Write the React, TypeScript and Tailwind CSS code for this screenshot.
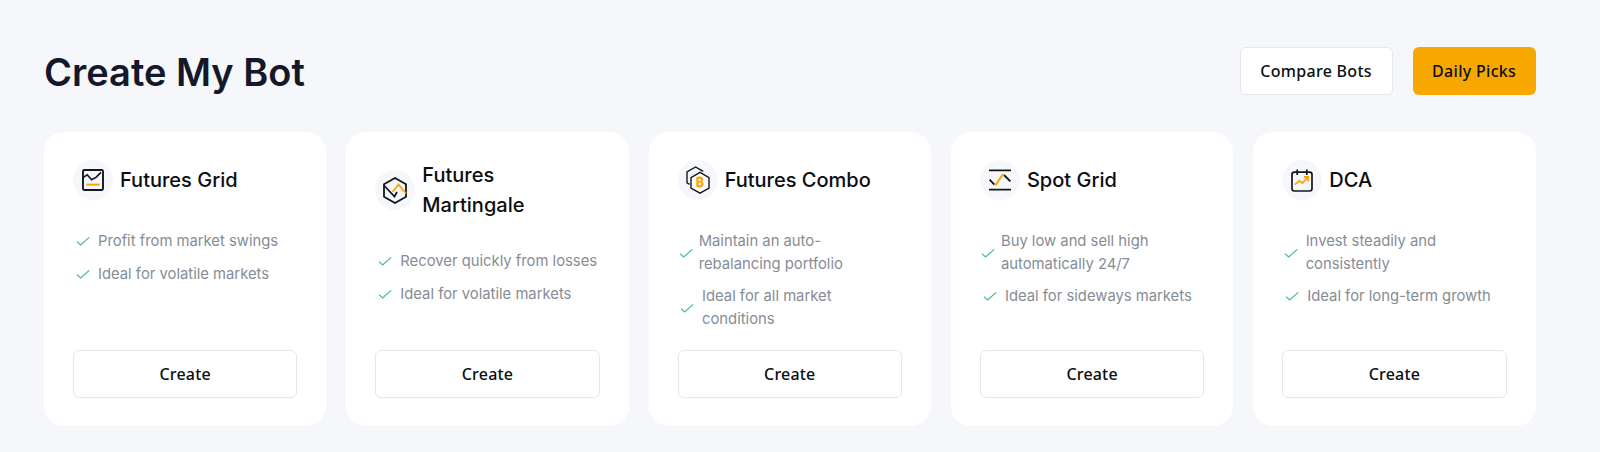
const inter = { fontFamily: "Inter, sans-serif" };
const noto = { fontFamily: "'Noto Sans', sans-serif" };

const BLACK = "#14161f";
const ORANGE = "#f8a700";

const CheckIcon = () => (
  <svg className="h-4 w-4" viewBox="0 0 16 16" fill="none" stroke="#3fbf86" strokeWidth={1.2} aria-hidden="true">
    <path d="M2 8.6l3.6 3.4L14.2 4.4" />
  </svg>
);

const GridIcon = () => (
  <svg className="h-[22px] w-[22px]" viewBox="0 0 22 22" fill="none" strokeWidth={1.9}>
    <rect x="1" y="1" width="20" height="20" rx="1.2" stroke={BLACK} />
    <path d="M1 8.6l4.2-2.8 4.4 5 4.4-2.4 5-5" stroke={BLACK} strokeWidth={1.7} />
    <path d="M4.4 15.6h13.2" stroke={ORANGE} strokeWidth={2} />
  </svg>
);

const MartingaleIcon = () => (
  <svg className="h-[27px] w-[24px]" viewBox="0 0 24 27" fill="none" strokeWidth={1.8}>
    <path d="M12 1l11 6.2v12.6L12 26 1 19.8V7.2z" stroke={BLACK} />
    <path d="M1 8.5l10.5 11 2.5-4.5" stroke={BLACK} />
    <path d="M9.5 15l6-7.5 7.5 9" stroke={ORANGE} />
  </svg>
);

const ComboIcon = () => (
  <svg className="h-[28px] w-[24px]" viewBox="0 0 24 28" fill="none" strokeWidth={1.4}>
    <path d="M3.6 18.4L1 16.8V6L9.6 1l7.6 4.4" stroke={BLACK} />
    <path d="M14 6.4l9 5.2v10.4l-9 5.2-9-5.2V11.6z" stroke={BLACK} fill="white" />
    <text x="14" y="21.4" textAnchor="middle" fontSize="12.5" fontWeight="800" fill={ORANGE} style={inter}>₿</text>
  </svg>
);

const SpotIcon = () => (
  <svg className="h-[22px] w-[24px]" viewBox="0 0 24 22" fill="none" strokeWidth={1.9}>
    <path d="M1 1.4h22M1 20.6h22" stroke={BLACK} />
    <path d="M1.6 10.6l4.8 5M16 6l6.4 6.4" stroke={BLACK} />
    <path d="M7.4 16.4L15 5" stroke={ORANGE} />
  </svg>
);

const DcaIcon = () => (
  <svg className="h-[23px] w-[22px]" viewBox="0 0 22 23" fill="none" strokeWidth={1.7}>
    <rect x="1" y="3.2" width="20" height="18.8" rx="2.4" stroke={BLACK} />
    <path d="M6.2 .4v5.6M15.8 .4v5.6" stroke={BLACK} />
    <path d="M3.8 15.6l4.4-3.8 3.2 2.2 5.4-5.8M13 8h4.2v4.2" stroke={ORANGE} strokeWidth={1.8} />
  </svg>
);

const BOTS = [
  {
    title: "Futures Grid",
    icon: <GridIcon />,
    features: ["Profit from market swings", "Ideal for volatile markets"],
  },
  {
    title: "Futures Martingale",
    icon: <MartingaleIcon />,
    features: ["Recover quickly from losses", "Ideal for volatile markets"],
  },
  {
    title: "Futures Combo",
    icon: <ComboIcon />,
    features: ["Maintain an auto-rebalancing portfolio", "Ideal for all market conditions"],
  },
  {
    title: "Spot Grid",
    icon: <SpotIcon />,
    features: ["Buy low and sell high automatically 24/7", "Ideal for sideways markets"],
  },
  {
    title: "DCA",
    icon: <DcaIcon />,
    features: ["Invest steadily and consistently", "Ideal for long-term growth"],
  },
];

const BotCard = ({ bot }: { bot: (typeof BOTS)[number] }) => (
  <div className="flex h-[294px] min-w-0 flex-col rounded-[20px] bg-white px-[29px] pt-[28px] pb-[28px]">
    <div className="flex items-center gap-[7px]">
      <div className="flex h-10 w-10 shrink-0 items-center justify-center rounded-full bg-[#f5f7fb]">
        {bot.icon}
      </div>
      <h3 className="text-[20px] leading-[30px] font-medium text-[#0b0e11]">{bot.title}</h3>
    </div>
    <ul className="mt-[30px] flex flex-1 flex-col gap-[10px]">
      {bot.features.map((feature) => (
        <li key={feature} className="flex items-center gap-[5px]">
          <div className="flex w-5 items-center justify-center">
            <CheckIcon />
          </div>
          <span className="text-[14.8px] leading-[22.5px] text-[#868c96]">{feature}</span>
        </li>
      ))}
    </ul>
    <button
      className="h-[48px] rounded-md border border-[#e6e8ec] bg-white text-[16px] font-medium tracking-[0.2px] text-[#0b0e11]"
      style={noto}
    >
      Create
    </button>
  </div>
);

export default function App() {
  return (
    <div className="h-[452px] bg-[#f5f7fb] pt-[47px] pl-[44px]" style={inter}>
      <div className="w-[1491.6px]">
        <div className="flex items-center justify-between">
          <h1 className="pt-[2px] text-[38px] leading-[46px] font-semibold text-[#14182b]">Create My Bot</h1>
          <div className="flex gap-5" style={noto}>
            <button className="h-[48px] w-[153px] rounded-md border border-[#e6e8ec] bg-white text-[16px] font-medium tracking-[0.3px] text-[#0b0e11]">
              Compare Bots
            </button>
            <button className="h-[48px] w-[123px] rounded-md bg-[#f8a700] text-[16px] font-medium tracking-[0.3px] text-[#0b0e11]">
              Daily Picks
            </button>
          </div>
        </div>
        <div className="mt-[37px] grid grid-cols-5 gap-5">
          {BOTS.map((bot) => (
            <BotCard key={bot.title} bot={bot} />
          ))}
        </div>
      </div>
    </div>
  );
}
